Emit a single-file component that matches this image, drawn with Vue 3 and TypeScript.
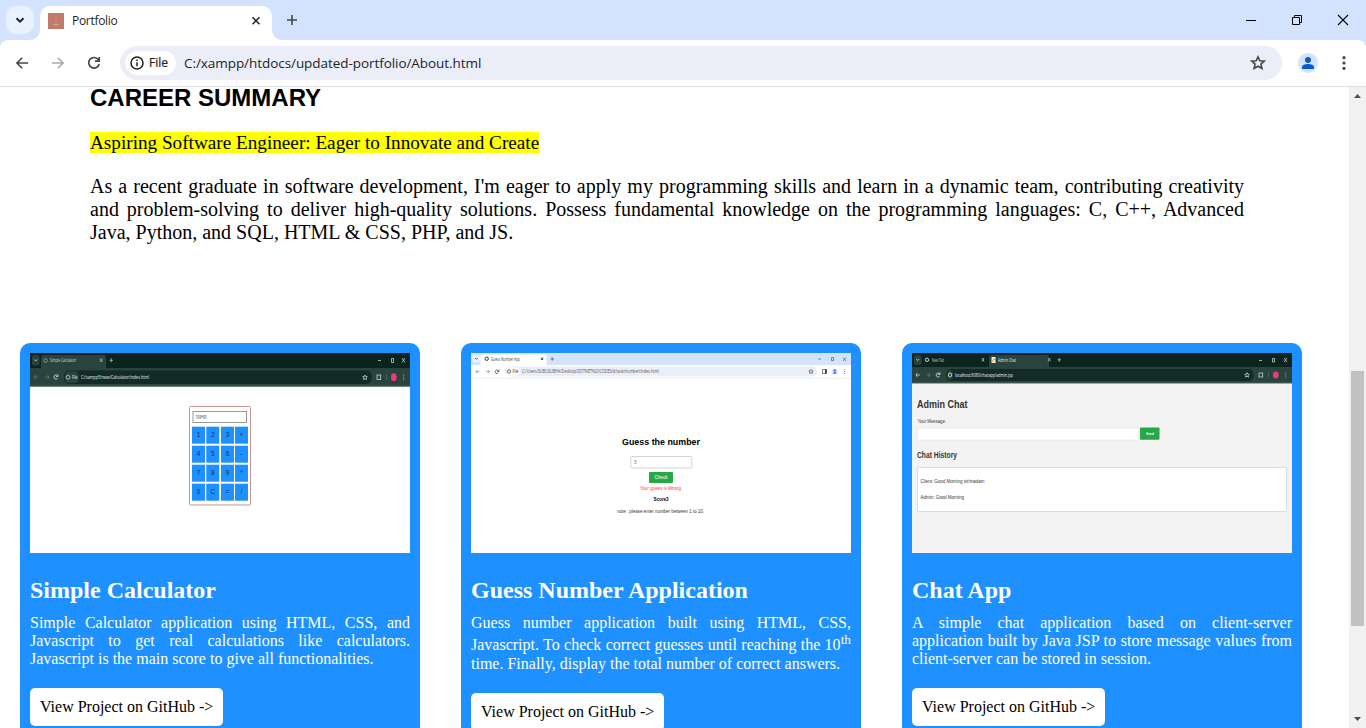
<script setup lang="ts">
interface Project {
  id: 'calculator' | 'guess' | 'chat'
  title: string
  text: string
  sup?: string
  rest?: string
}

const projects: Project[] = [
  {
    id: 'calculator',
    title: 'Simple Calculator',
    text: 'Simple Calculator application using HTML, CSS, and Javascript to get real calculations like calculators. Javascript is the main score to give all functionalities.',
  },
  {
    id: 'guess',
    title: 'Guess Number Application',
    text: 'Guess number application built using HTML, CSS, Javascript. To check correct guesses until reaching the 10',
    sup: 'th',
    rest: ' time. Finally, display the total number of correct answers.',
  },
  {
    id: 'chat',
    title: 'Chat App',
    text: 'A simple chat application based on client-server application built by Java JSP to store message values from client-server can be stored in session.',
  },
]

const keys: string[][] = [
  ['1', '2', '3', '+'],
  ['4', '5', '6', '-'],
  ['7', '8', '9', '*'],
  ['0', 'C', '=', '/'],
]
const keyX = [162, 176.3, 191, 205]
const keyY = [73.7, 92.7, 111.7, 130.7]
</script>

<template>
  <div class="window">
    <header class="tabstrip">
      <button class="tab-search" aria-label="Search tabs">
        <svg width="28" height="28" viewBox="0 0 28 28"><path d="M10.500 12.300l3.500 3.400 3.500-3.400" fill="none" stroke="#1f1f1f" stroke-width="1.900" /></svg>
      </button>
      <div class="tab">
        <svg class="favicon" width="16" height="16" viewBox="0 0 16 16">
          <rect width="16" height="16" fill="#c17b69" />
          <path d="M8 4.500v1.500M7 7.500h2M7 9.500h2" stroke="#cf9485" stroke-width="1" />
          <path d="M5 11.700h6" stroke="#dcaea2" stroke-width="1" />
        </svg>
        <span class="tab-title">Portfolio</span>
        <svg class="tab-close" width="16" height="16" viewBox="0 0 16 16"><path d="M4.500 4.300l7 7M11.500 4.300l-7 7" stroke="#1f1f1f" stroke-width="1.500" /></svg>
        <svg class="flare" width="10" height="10" viewBox="0 0 10 10"><path d="M0 0v10h10A10 10 0 0 1 0 0z" fill="#fff" /></svg>
        <svg class="flare left" width="10" height="10" viewBox="0 0 10 10"><path d="M0 0v10h10A10 10 0 0 1 0 0z" fill="#fff" /></svg>
      </div>
      <svg class="new-tab" width="14" height="14" viewBox="0 0 14 14"><path d="M7 2v10M2 7h10" stroke="#444746" stroke-width="1.600" /></svg>
      <div class="controls">
        <svg width="46" height="40" viewBox="0 0 46 40"><path d="M18 20.500h10" stroke="#000" /></svg>
        <svg width="46" height="40" viewBox="0 0 46 40"><path d="M18.500 17.500h7v7h-7zM20.500 17.500v-2h7v7h-2" fill="none" stroke="#000" /></svg>
        <svg width="46" height="40" viewBox="0 0 46 40"><path d="M18 15l10 10M28 15l-10 10" stroke="#000" stroke-width="1.100" /></svg>
      </div>
    </header>

    <nav class="toolbar">
      <div class="nav-icons">
        <svg width="16" height="16" viewBox="0 0 16 16"><path d="M14 8H3M8.200 2.700L2.900 8l5.300 5.300" fill="none" stroke="#444746" stroke-width="1.600" /></svg>
        <svg width="16" height="16" viewBox="0 0 16 16"><path d="M2 8h11M7.800 2.700L13.100 8l-5.300 5.300" fill="none" stroke="#aaabab" stroke-width="1.600" /></svg>
        <svg width="16" height="16" viewBox="0 0 16 16"><path d="M12.300 4.700A5.300 5.300 0 1 0 13.200 8.900M13.200 2v4.200H9" fill="none" stroke="#444746" stroke-width="1.700" /></svg>
      </div>
      <div class="omnibox">
        <div class="chip">
          <svg width="14" height="14" viewBox="0 0 14 14"><circle cx="7" cy="7" r="6" fill="none" stroke="#1f1f1f" stroke-width="1.500" /><path d="M7 6.200v4M7 3.500v1.500" stroke="#1f1f1f" stroke-width="1.500" /></svg>
          <span class="chip-label">File</span>
        </div>
        <span class="url">C:/xampp/htdocs/updated-portfolio/About.html</span>
        <svg class="star" width="18" height="18" viewBox="0 0 18 18"><path d="M9 2.800l1.850 4 4.400.4-3.300 2.950 1 4.300L9 12.200l-3.950 2.250 1-4.300L2.750 7.200l4.400-.4z" fill="none" stroke="#444746" stroke-width="1.600" /></svg>
      </div>
      <svg class="profile" width="20" height="20" viewBox="0 0 20 20"><circle cx="10" cy="10" r="10" fill="#d3e3fd" /><circle cx="10" cy="7" r="3" fill="#0b57d0" /><path d="M4 16v-1.700C4 12 7 11 10 11s6 1 6 3.300V16z" fill="#0b57d0" /></svg>
      <svg class="menu" width="4" height="16" viewBox="0 0 4 16"><g fill="#444746"><circle cx="2" cy="2.700" r="1.600" /><circle cx="2" cy="8" r="1.600" /><circle cx="2" cy="13.300" r="1.600" /></g></svg>
    </nav>

    <div class="viewport">
      <main class="page">
        <section class="summary">
          <h2>CAREER SUMMARY</h2>
          <p class="tagline"><mark>Aspiring Software Engineer: Eager to Innovate and Create</mark></p>
          <p class="about">As a recent graduate in software development, I'm eager to apply my programming skills and learn in a dynamic team, contributing creativity and problem-solving to deliver high-quality solutions. Possess fundamental knowledge on the programming languages: C, C++, Advanced Java, Python, and SQL, HTML &amp; CSS, PHP, and JS.</p>
        </section>

        <section class="projects">
          <article v-for="p in projects" :key="p.id" class="card">
            <!-- Calculator preview -->
            <svg v-if="p.id === 'calculator'" class="thumb" width="380" height="200" viewBox="0 0 380 200">
              <rect width="380" height="200" fill="#fff" />
              <rect width="380" height="16" fill="#0b241f" />
              <rect y="15" width="380" height="18.500" fill="#29433d" />
              <rect y="32.500" width="380" height="1.200" fill="#536761" />
              <rect x="2" y="2" width="7.500" height="10.500" rx="2.500" fill="#29433d" />
              <path d="M4.300 6.500l1.400 1.500 1.400-1.500" fill="none" stroke="#dce6e2" stroke-width=".8" />
              <path d="M11 16V4q0-2 2-2h61q2 0 2 2v12z" fill="#29433d" />
              <circle cx="15.500" cy="7.500" r="1.800" fill="none" stroke="#8d9c97" stroke-width=".9" />
              <text x="20" y="9.300" class="tiny" fill="#d5dfdb" textLength="26" lengthAdjust="spacingAndGlyphs">Simple Calculator</text>
              <path d="M70 5.500l2.500 3.500M72.500 5.500L70 9M79.500 7.300h3.500M81.200 5.300v4" stroke="#c8d3cf" stroke-width=".7" />
              <path d="M348 7.500h3M361.500 5.500h2v4h-2zM372 5l3 4.500M375 5l-3 4.500" stroke="#dce6e2" stroke-width=".7" fill="none" />
              <path d="M4 24h4M5.500 22L4 24l1.500 2M15 24h4M17.500 22l1.500 2-1.500 2" stroke="#71827d" stroke-width=".7" fill="none" />
              <path d="M27.500 22.500a2 2.200 0 1 0 0 3M28 21.500v2h-2" stroke="#dce6e2" stroke-width=".8" fill="none" />
              <rect x="34" y="17.500" width="307.500" height="13.500" rx="5" fill="#132b26" />
              <rect x="35" y="18.500" width="13.500" height="11.500" rx="4" fill="#29433d" />
              <circle cx="38" cy="24.300" r="1.900" fill="none" stroke="#dce6e2" stroke-width=".7" />
              <text x="42" y="26" class="tiny" fill="#e7efec" textLength="5.500" lengthAdjust="spacingAndGlyphs">File</text>
              <text x="51" y="26" class="tiny" fill="#e7efec" textLength="68" lengthAdjust="spacingAndGlyphs">C:/xampp5/nww/Calculator/index.html</text>
              <path d="M335 22l.7 1.600 1.600.1-1.200 1.200.4 1.700-1.500-.9-1.500.9.4-1.700-1.200-1.200 1.600-.1z" fill="none" stroke="#dce6e2" stroke-width=".7" />
              <rect x="347" y="22" width="3.700" height="4.500" fill="none" stroke="#c8d3cf" stroke-width=".8" />
              <path d="M356.500 21v6" stroke="#60746d" stroke-width=".6" />
              <ellipse cx="363.800" cy="24.200" rx="2.800" ry="3.900" fill="#e93d79" />
              <path d="M373.700 21.500v6" stroke="#aebbb6" stroke-width=".8" stroke-dasharray="1.200 1" />
              <rect x="159.500" y="53.500" width="61" height="98.500" rx="1" fill="#fff" stroke="#c99595" />
              <rect x="163" y="58.500" width="53.500" height="11" fill="#fff" stroke="#999" />
              <text x="165.500" y="65.800" class="tiny" textLength="11" fill="#222" lengthAdjust="spacingAndGlyphs">109*90</text>
              <g v-for="(row, r) in keys" :key="r">
                <g v-for="(k, c) in row" :key="k">
                  <rect :x="keyX[c]" :y="keyY[r]" width="13" height="17" fill="#1e90ff" />
                  <text :x="keyX[c] + 6.500" :y="keyY[r] + 10.700" class="key" text-anchor="middle">{{ k }}</text>
                </g>
              </g>
            </svg>

            <!-- Guess the number preview -->
            <svg v-else-if="p.id === 'guess'" class="thumb" width="380" height="200" viewBox="0 0 380 200">
              <rect width="380" height="200" fill="#fff" />
              <rect width="380" height="12" fill="#d3e3fd" />
              <path d="M9.500 12.500V3.500q0-2 2-2h62q2 0 2 2v9z" fill="#fff" />
              <rect x="1.500" y="1.500" width="7.500" height="8" rx="2.500" fill="#eaf2ff" />
              <path d="M4 5l1.500 1.300L7 5" fill="none" stroke="#222" stroke-width=".7" />
              <circle cx="15.700" cy="5.700" r="1.700" fill="none" stroke="#333" />
              <text x="20" y="7.500" class="tiny" textLength="29" lengthAdjust="spacingAndGlyphs" fill="#444">Guess Number App</text>
              <path d="M70 4.500l2.200 2.500M72.200 4.500L70 7" stroke="#111" stroke-width=".8" />
              <path d="M79.500 6h3.500M81.200 4.200v3.600M347 6h3M360.500 4.500h2v3h-2zM372 4.500l3 3.500M375 4.500L372 8" stroke="#444" stroke-width=".6" fill="none" />
              <path d="M5 18.700h3.500M6.500 17L5 18.700l1.500 1.700M15 18.700h3.500M17 17l1.500 1.700-1.500 1.700" stroke="#777" stroke-width=".6" fill="none" />
              <path d="M27.300 17.500a1.800 1.800 0 1 0 0 2.500M28 16.500v2h-2" stroke="#333" stroke-width=".7" fill="none" />
              <rect x="34" y="13.500" width="312" height="10" rx="5" fill="#ebeef8" />
              <rect x="35" y="14.500" width="14" height="8" rx="4" fill="#fff" />
              <circle cx="38" cy="18.500" r="1.700" fill="none" stroke="#222" stroke-width=".7" />
              <text x="41.500" y="20.200" class="tiny" textLength="6" lengthAdjust="spacingAndGlyphs" fill="#222">File</text>
              <text x="51" y="20.200" class="tiny" textLength="137" lengthAdjust="spacingAndGlyphs" fill="#555">C:/Users/SUBUSUBHA/Desktop/DOTNET%20CODES/d/task/number/index.html</text>
              <path d="M340 16.500l.7 1.300 1.500.1-1.100 1 .3 1.500-1.400-.8-1.400.8.300-1.500-1.100-1 1.500-.1z" fill="none" stroke="#555" stroke-width=".7" />
              <path d="M351.500 16.500h4v4h-4z" fill="none" stroke="#333" stroke-width=".6" /><path d="M354 16.500h1.500v4H354z" fill="#333" />
              <ellipse cx="363.800" cy="18.600" rx="3" ry="2.900" fill="#d3e3fd" /><circle cx="363.800" cy="17.500" r="1.100" fill="#0b57d0" /><path d="M361.800 20.600q2-3 4 0z" fill="#0b57d0" />
              <path d="M373.700 16v5.500" stroke="#777" stroke-width=".8" stroke-dasharray="1 1" />
              <path d="M0 25.300h380" stroke="#e8e8ec" stroke-width=".8" />
              <text x="151" y="92" class="sans bold" font-size="9.200" textLength="78" lengthAdjust="spacingAndGlyphs">Guess the number</text>
              <rect x="159.800" y="103.500" width="61" height="11.500" rx="1" fill="#fff" stroke="#d1d3d5" />
              <text x="163" y="111" class="tiny" fill="#555">3</text>
              <rect x="178" y="119" width="24" height="11" rx="1" fill="#28a745" />
              <text x="183.500" y="126.200" class="sans" font-size="4.500" fill="#fff" textLength="13" lengthAdjust="spacingAndGlyphs">Check</text>
              <text x="169" y="137.300" class="sans" font-size="4.700" fill="#f33" textLength="41" lengthAdjust="spacingAndGlyphs">Your guess is Wrong</text>
              <text x="182.500" y="148.300" class="sans bold" font-size="4.500" textLength="15" lengthAdjust="spacingAndGlyphs">Score3</text>
              <text x="146" y="159.800" class="sans" font-size="4.700" fill="#333" textLength="87" lengthAdjust="spacingAndGlyphs">note : please enter number between 1 to 10.</text>
            </svg>

            <!-- Chat preview -->
            <svg v-else class="thumb" width="380" height="200" viewBox="0 0 380 200">
              <rect width="380" height="200" fill="#f3f3f3" />
              <rect width="380" height="14" fill="#0b241f" />
              <rect y="14" width="380" height="16" fill="#29433d" />
              <rect y="29.800" width="380" height="1" fill="#8c9592" />
              <rect x="2" y="2" width="7.500" height="10" rx="2.500" fill="#29433d" />
              <path d="M4.300 6l1.400 1.500L7.100 6" fill="none" stroke="#dce6e2" stroke-width=".8" />
              <circle cx="15" cy="6.800" r="1.700" fill="none" stroke="#c8d3cf" />
              <text x="20" y="8.500" class="tiny" fill="#c8d3cf" textLength="12" lengthAdjust="spacingAndGlyphs">New Tab</text>
              <path d="M77 14V4q0-2 2-2h56q2 0 2 2v10z" fill="#29433d" />
              <rect x="79.500" y="4" width="4" height="6" fill="#f6ead0" /><path d="M80 9l2-3 1 1" stroke="#d8891d" stroke-width=".8" fill="none" />
              <text x="86" y="8.500" class="tiny" fill="#e7efec" textLength="18" lengthAdjust="spacingAndGlyphs">Admin Chat</text>
              <path d="M70 5l2 3.500M72 5l-2 3.500M136 5l2.500 3.500M138.500 5L136 8.500M145.500 6.800h3.500M147.200 5v3.800" stroke="#c8d3cf" stroke-width=".7" />
              <path d="M347 7.500h3M360.500 5.500h2v3.500h-2zM372 5l3 4M375 5l-3 4" stroke="#dce6e2" stroke-width=".7" fill="none" />
              <path d="M4 22h4M5.500 20L4 22l1.500 2" stroke="#dce6e2" stroke-width=".7" fill="none" /><path d="M15 22h3M16.500 20l1.500 2-1.500 2" stroke="#71827d" stroke-width=".7" fill="none" />
              <path d="M27.500 20.500a2 2 0 1 0 0 3M28 19.500v2h-2" stroke="#dce6e2" stroke-width=".8" fill="none" />
              <rect x="34" y="16" width="307.500" height="12" rx="5" fill="#132b26" />
              <ellipse cx="38" cy="22" rx="3" ry="4.500" fill="#29433d" /><ellipse cx="38" cy="22" rx="1.600" ry="2" fill="none" stroke="#dce6e2" stroke-width=".8" />
              <text x="43" y="24" class="tiny" fill="#e7efec" textLength="58" lengthAdjust="spacingAndGlyphs">localhost:8080/chatapp/admin.jsp</text>
              <path d="M335 19.700l.7 1.500 1.600.1-1.200 1.200.4 1.600-1.500-.9-1.500.9.4-1.600-1.200-1.200 1.600-.1z" fill="none" stroke="#dce6e2" stroke-width=".7" />
              <rect x="347" y="20" width="3.700" height="4" fill="none" stroke="#c8d3cf" stroke-width=".8" />
              <path d="M356.500 19v6" stroke="#60746d" stroke-width=".6" />
              <ellipse cx="363.800" cy="22" rx="2.900" ry="3.400" fill="#e93d79" />
              <path d="M373.700 19.500v5" stroke="#aebbb6" stroke-width=".8" stroke-dasharray="1 1" />
              <text x="5" y="54.800" class="sans bold" font-size="11.500" fill="#333" textLength="50.500" lengthAdjust="spacingAndGlyphs">Admin Chat</text>
              <text x="5.500" y="70" class="sans" font-size="4.900" fill="#333" textLength="28.500" lengthAdjust="spacingAndGlyphs">Your Message:</text>
              <rect x="5.500" y="75" width="221" height="12" fill="#fff" stroke="#e4e4e4" stroke-width=".6" />
              <rect x="228" y="74.500" width="19.500" height="12.300" rx="1" fill="#28a745" />
              <text x="234" y="82.200" class="sans bold" font-size="3.800" fill="#fff" textLength="8" lengthAdjust="spacingAndGlyphs">Send</text>
              <text x="5" y="105.300" class="sans bold" font-size="8.300" fill="#333" textLength="40" lengthAdjust="spacingAndGlyphs">Chat History</text>
              <rect x="5.500" y="114.500" width="369" height="44" rx=".7" fill="#fff" stroke="#d7d7d7" stroke-width=".9" />
              <text x="8.500" y="130.300" class="sans" font-size="5" fill="#333" textLength="64" lengthAdjust="spacingAndGlyphs">Client: Good Morning sir/madam</text>
              <text x="8.500" y="146.300" class="sans" font-size="5" fill="#333" textLength="43.500" lengthAdjust="spacingAndGlyphs">Admin: Good Morning</text>
            </svg>

            <h3>{{ p.title }}</h3>
            <p class="desc">{{ p.text }}<sup v-if="p.sup">{{ p.sup }}</sup>{{ p.rest }}</p>
            <a class="button">View Project on GitHub -&gt;</a>
          </article>
        </section>
      </main>
      <aside class="scrollbar">
        <svg width="17" height="17" viewBox="0 0 17 17"><path d="M5 11h7L8.500 7z" fill="#505050" /></svg>
        <div class="thumb-bar"></div>
        <svg class="down" width="17" height="17" viewBox="0 0 17 17"><path d="M5 6h7l-3.500 4z" fill="#505050" /></svg>
      </aside>
    </div>
  </div>
</template>

<style>
html, body { margin: 0; overflow: hidden; background: #fff; }
</style>

<style scoped>
.window { width: 1366px; height: 728px; display: flex; flex-direction: column; overflow: hidden; background: #d3e3fd; font-family: "Liberation Serif", "Times New Roman", serif; }
.tabstrip { height: 40px; flex: none; display: flex; align-items: flex-start; }
.tab-search { width: 28px; height: 28px; margin: 6px 6px 0; padding: 0; border: 0; border-radius: 10px; background: #e9f1fe; flex: none; }
.tab-search svg { display: block; }
.tab { position: relative; display: flex; align-items: center; width: 232px; height: 34px; margin-top: 6px; padding: 0 8px 5px; box-sizing: border-box; border-radius: 10px 10px 0 0; background: #fff; }
.tab-title { margin-left: 8px; flex: 1; font: 12px/16px "Open Sans", "Noto Sans", sans-serif; letter-spacing: -.3px; color: #1f1f1f; }
.flare { position: absolute; right: -10px; bottom: 0; }
.flare.left { right: auto; left: -10px; transform: scaleX(-1); }
.new-tab { margin: 13px 0 0 13px; }
.controls { margin-left: auto; display: flex; }
.toolbar { height: 46px; flex: none; display: flex; align-items: center; background: #fff; border-radius: 8px 8px 0 0; }
.nav-icons { display: flex; gap: 20px; padding-left: 14px; width: 106px; }
.omnibox { width: 1162px; height: 34px; box-sizing: border-box; display: flex; align-items: center; padding: 0 15px 0 5px; border-radius: 17px; background: #ebeef8; }
.chip { width: 51px; height: 24px; box-sizing: border-box; display: flex; align-items: center; padding-left: 5px; gap: 5px; border-radius: 12px; background: #fff; }
.chip-label { font: 12px/16px "Open Sans", "Noto Sans", sans-serif; color: #1f1f1f; -webkit-text-stroke: .2px #1f1f1f; }
.url { margin-left: 8px; flex: 1; font: 13.5px/18px "Open Sans", "Noto Sans", sans-serif; letter-spacing: -.06px; color: #1f1f1f; }
.profile { margin-left: 16px; }
.menu { margin-left: 24px; }
.viewport { flex: 1; min-height: 0; display: flex; border-top: 1px solid #dcdddf; background: #fff; }
.page { flex: 1; height: 641px; overflow: hidden; }
.summary { width: 1154px; margin-left: 90px; color: #000; }
h2 { margin: 0; font: bold 24px/21px "Liberation Sans", Arial, sans-serif; }
.tagline { margin: 23px 0 0; font-size: 19.2px; line-height: 23px; }
mark { background: #ff0; color: #000; }
.about { margin: 21px 0 0; font-size: 20px; line-height: 23px; text-align: justify; }
.projects { display: flex; align-items: flex-start; gap: 41px; margin: 99px 0 0 20px; }
.card { width: 380px; height: 430px; flex: none; padding: 10px; border-radius: 10px; background: #1e90ff; color: #fff; }
.thumb { display: block; }
h3 { margin: 24px 0 10px; font-size: 24px; line-height: 27px; font-weight: bold; }
.desc { margin: 0 0 20px; font-size: 16px; line-height: normal; text-align: justify; }
.desc sup::after { content: ""; display: inline-block; width: 0; height: 11px; vertical-align: -11px; }
.button { display: inline-block; padding: 10px; border-radius: 5px; background: #fff; color: #000; font-size: 16px; line-height: 18px; white-space: nowrap; }
.tiny { font: 4.600px "Open Sans", sans-serif; }
.key { font: 6.500px "Liberation Sans", sans-serif; fill: #123450; }
.sans { font-family: "Liberation Sans", Arial, sans-serif; }
.bold { font-weight: bold; }
.scrollbar { width: 17px; flex: none; height: 641px; display: flex; flex-direction: column; background: #f1f1f1; }
.scrollbar svg { display: block; flex: none; }
.thumb-bar { width: 13px; height: 255px; margin: 267px 0 0 2px; background: #c1c1c1; }
.down { margin-top: auto; }
</style>
